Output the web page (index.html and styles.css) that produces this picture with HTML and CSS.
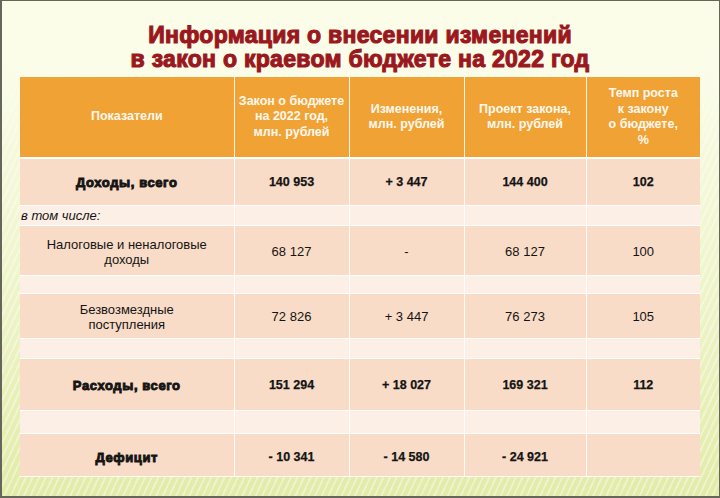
FILE: index.html
```html
<!DOCTYPE html>
<html lang="ru">
<head>
<meta charset="utf-8">
<title>Информация о внесении изменений</title>
<link rel="stylesheet" href="styles.css">
</head>
<body>
<div class="slide">
  <h1 class="title">Информация о внесении изменений<br>в закон о краевом бюджете на 2022 год</h1>
  <table class="budget">
    <colgroup>
      <col class="c1"><col class="c2"><col class="c3"><col class="c4"><col class="c5">
    </colgroup>
    <thead>
      <tr class="r-head">
        <th>Показатели</th>
        <th>Закон о бюджете<br>на 2022 год,<br>млн. рублей</th>
        <th>Изменения,<br>млн. рублей</th>
        <th>Проект закона,<br>млн. рублей</th>
        <th>Темп роста<br>к закону<br>о бюджете,<br>%</th>
      </tr>
    </thead>
    <tbody>
      <tr class="row strong r-income">
        <td class="name heavy">Доходы, всего</td>
        <td>140 953</td><td>+ 3 447</td><td>144 400</td><td>102</td>
      </tr>
      <tr class="gap r-incl">
        <td class="incl">в том числе:</td><td></td><td></td><td></td><td></td>
      </tr>
      <tr class="row r-tax">
        <td class="name">Налоговые и неналоговые<br>доходы</td>
        <td>68 127</td><td>-</td><td>68 127</td><td>100</td>
      </tr>
      <tr class="gap r-g1"><td></td><td></td><td></td><td></td><td></td></tr>
      <tr class="row r-free">
        <td class="name">Безвозмездные<br>поступления</td>
        <td>72 826</td><td>+ 3 447</td><td>76 273</td><td>105</td>
      </tr>
      <tr class="gap r-g2"><td></td><td></td><td></td><td></td><td></td></tr>
      <tr class="row strong r-exp">
        <td class="name heavy">Расходы, всего</td>
        <td>151 294</td><td>+ 18 027</td><td>169 321</td><td>112</td>
      </tr>
      <tr class="gap r-g3"><td></td><td></td><td></td><td></td><td></td></tr>
      <tr class="row strong r-def">
        <td class="name heavy">Дефицит</td>
        <td>- 10 341</td><td>- 14 580</td><td>- 24 921</td><td></td>
      </tr>
    </tbody>
  </table>
</div>
</body>
</html>
```

FILE: styles.css
```css
html, body {
  margin: 0;
  padding: 0;
}

body {
  width: 720px;
  height: 498px;
  overflow: hidden;
  font-family: "Liberation Sans", Arial, sans-serif;
}

.slide {
  box-sizing: border-box;
  width: 720px;
  height: 498px;
  border: 1px solid #66675a;
  border-left-width: 2px;
  border-bottom-width: 2px;
  padding: 22px 0 0 18px;
  display: flex;
  flex-direction: column;
  background:
    linear-gradient(to bottom, #fbfde9 0%, #fbfde9 8%, rgba(251,253,233,0) 30%),
    repeating-linear-gradient(115deg, rgba(255,255,255,0.38) 0 2px, rgba(255,255,255,0) 2px 6px),
    linear-gradient(to bottom, #fbfde9 0%, #f8fbe2 20%, #eef4c8 60%, #e2eba8 100%);
}

.title {
  margin: 0 0 6px 0;
  width: 680px;
  text-align: center;
  font-family: "Liberation Sans", Arial, sans-serif;
  font-weight: bold;
  font-size: 23px;
  line-height: 24px;
  letter-spacing: 0.3px;
  color: #9a181d;
  -webkit-text-stroke: 1.1px #9a181d;
}

.budget {
  width: 680px;
  border-collapse: collapse;
  table-layout: fixed;
  font-family: "Liberation Sans", Arial, sans-serif;
  color: #141414;
}

.c1 { width: 214px; }
.c2 { width: 115px; }
.c3 { width: 115px; }
.c4 { width: 122px; }
.c5 { width: 114px; }

.budget th,
.budget td {
  padding: 0;
  text-align: center;
  vertical-align: middle;
  border-right: 1px solid rgba(255,255,255,0.9);
  border-bottom: 1px solid rgba(255,255,255,0.9);
}

.budget th:last-child,
.budget td:last-child {
  border-right: none;
}

.r-head th {
  background: #f0a234;
  color: #fff8ee;
  font-weight: bold;
  font-size: 12.5px;
  line-height: 15.5px;
  height: 80px;
  border-bottom: 2px solid #fff;
}

.row td {
  background: #f9dcc7;
  font-size: 13px;
  line-height: 15px;
}

.gap td {
  background: #fcefe5;
  font-size: 13px;
}

.strong td {
  font-weight: bold;
  font-size: 12.5px;
  -webkit-text-stroke: 0.25px #141414;
}

.strong td.heavy {
  font-size: 13px;
  letter-spacing: 0.6px;
  -webkit-text-stroke: 0.9px #141414;
}

.incl {
  text-align: left !important;
  font-style: italic;
  font-size: 12.5px;
  padding-left: 1px !important;
}

.r-income td { height: 46px; }
.r-incl td   { height: 19px; }
.r-tax td    { height: 47px; padding-top: 2px; }
.r-g1 td     { height: 17px; }
.r-free td   { height: 43px; padding-top: 1px; }
.r-g2 td     { height: 19px; }
.r-exp td    { height: 49px; padding-top: 2px; }
.r-g3 td     { height: 22px; }
.r-def td    { height: 38px; padding-top: 4px; }
```
